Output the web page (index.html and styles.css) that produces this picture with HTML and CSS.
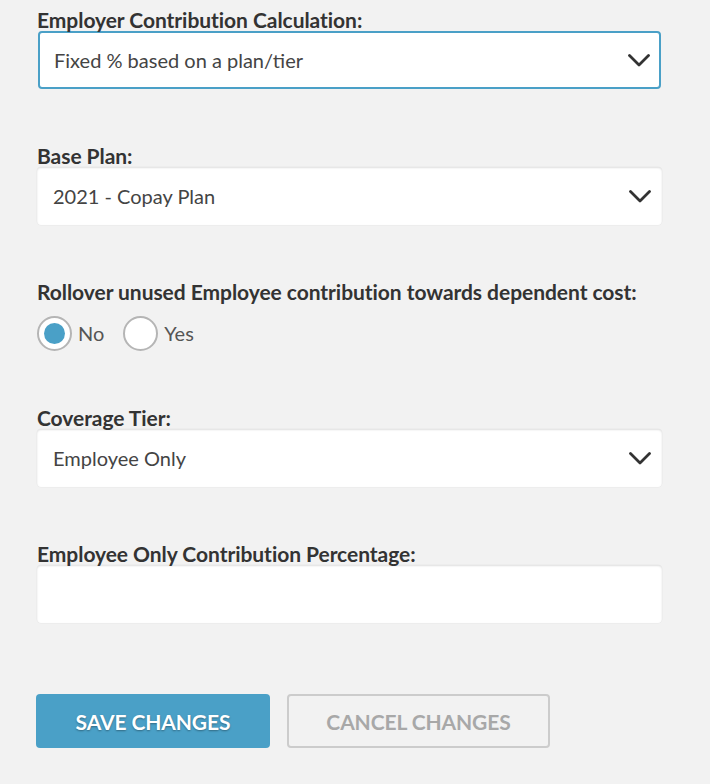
FILE: index.html
```html
<!DOCTYPE html>
<html>
<head>
<meta charset="utf-8">
<link rel="stylesheet" href="styles.css">
</head>
<body>
<form class="form">
  <div class="field">
    <label class="label">Employer Contribution Calculation:</label>
    <div class="select focused">
      <span class="value">Fixed % based on a plan/tier</span>
      <svg class="chev" width="22" height="13" viewBox="0 0 22 13"><path d="M1.5 1.5 L11 11 L20.5 1.5" fill="none" stroke="#333" stroke-width="2.8" stroke-linecap="round" stroke-linejoin="round"/></svg>
    </div>
  </div>

  <div class="field">
    <label class="label">Base Plan:</label>
    <div class="select">
      <span class="value">2021 - Copay Plan</span>
      <svg class="chev" width="22" height="13" viewBox="0 0 22 13"><path d="M1.5 1.5 L11 11 L20.5 1.5" fill="none" stroke="#333" stroke-width="2.8" stroke-linecap="round" stroke-linejoin="round"/></svg>
    </div>
  </div>

  <div class="field">
    <label class="label">Rollover unused Employee contribution towards dependent cost:</label>
    <div class="radios">
      <span class="radio checked"><span class="circle"><span class="dot"></span></span><span class="rtext">No</span></span>
      <span class="radio"><span class="circle"></span><span class="rtext">Yes</span></span>
    </div>
  </div>

  <div class="field">
    <label class="label">Coverage Tier:</label>
    <div class="select">
      <span class="value">Employee Only</span>
      <svg class="chev" width="22" height="13" viewBox="0 0 22 13"><path d="M1.5 1.5 L11 11 L20.5 1.5" fill="none" stroke="#333" stroke-width="2.8" stroke-linecap="round" stroke-linejoin="round"/></svg>
    </div>
  </div>

  <div class="field">
    <label class="label">Employee Only Contribution Percentage:</label>
    <div class="select input"></div>
  </div>

  <div class="actions">
    <button type="button" class="btn save">SAVE CHANGES</button>
    <button type="button" class="btn cancel">CANCEL CHANGES</button>
  </div>
</form>
</body>
</html>
```

FILE: styles.css
```css
html, body {
  margin: 0;
  padding: 0;
  background: #f2f2f2;
}
body {
  font-family: Lato, "Open Sans", sans-serif;
  color: #333;
}
.form {
  padding: 8px 0 0 37px;
  width: 625px;
}
.field {
  margin-bottom: 55px;
}
.label {
  display: block;
  font-size: 21px;
  font-weight: 700;
  line-height: 23px;
  color: #333;
  white-space: nowrap;
  letter-spacing: -0.05px;
}
.select {
  box-sizing: border-box;
  height: 58px;
  background: #fff;
  border-radius: 4px;
  box-shadow: inset 0 1px 2px rgba(0,0,0,0.13), 0 0 0 0.5px rgba(0,0,0,0.04);
  display: flex;
  align-items: center;
  justify-content: space-between;
  padding: 0 11px 0 16px;
}
.select.focused {
  border: 2px solid #4aa0c7;
  box-shadow: none;
  padding: 0 9px 0 14px;
  margin-left: 1px;
  width: 623px;
}
.value {
  font-size: 20px;
  color: #444;
}
.chev {
  display: block;
}
.radios {
  display: flex;
  align-items: center;
  margin-top: 12px;
  height: 36px;
}
.radio {
  display: flex;
  align-items: center;
  margin-right: 19px;
}
.circle {
  box-sizing: border-box;
  width: 35px;
  height: 35px;
  border-radius: 50%;
  border: 2px solid #b5b5b5;
  background: #fff;
  display: flex;
  align-items: center;
  justify-content: center;
}
.dot {
  width: 21px;
  height: 21px;
  border-radius: 50%;
  background: #4aa0c7;
}
.rtext {
  margin-left: 6px;
  font-size: 20px;
  color: #555;
}
.actions {
  display: flex;
  gap: 17px;
  margin-top: 71px;
}
.btn {
  box-sizing: border-box;
  height: 54px;
  border-radius: 4px;
  font-family: Lato, "Open Sans", sans-serif;
  font-weight: 700;
  font-size: 21px;
  letter-spacing: -0.1px;
  cursor: pointer;
  padding: 0;
}
.save {
  width: 234px;
  margin-left: -1px;
  background: #4aa0c7;
  color: #fff;
  border: none;
  text-shadow: 0 1px 2px rgba(0,0,0,0.35);
}
.cancel {
  width: 263px;
  background: transparent;
  color: #a8a8a8;
  border: 2px solid #cccccc;
}
```
